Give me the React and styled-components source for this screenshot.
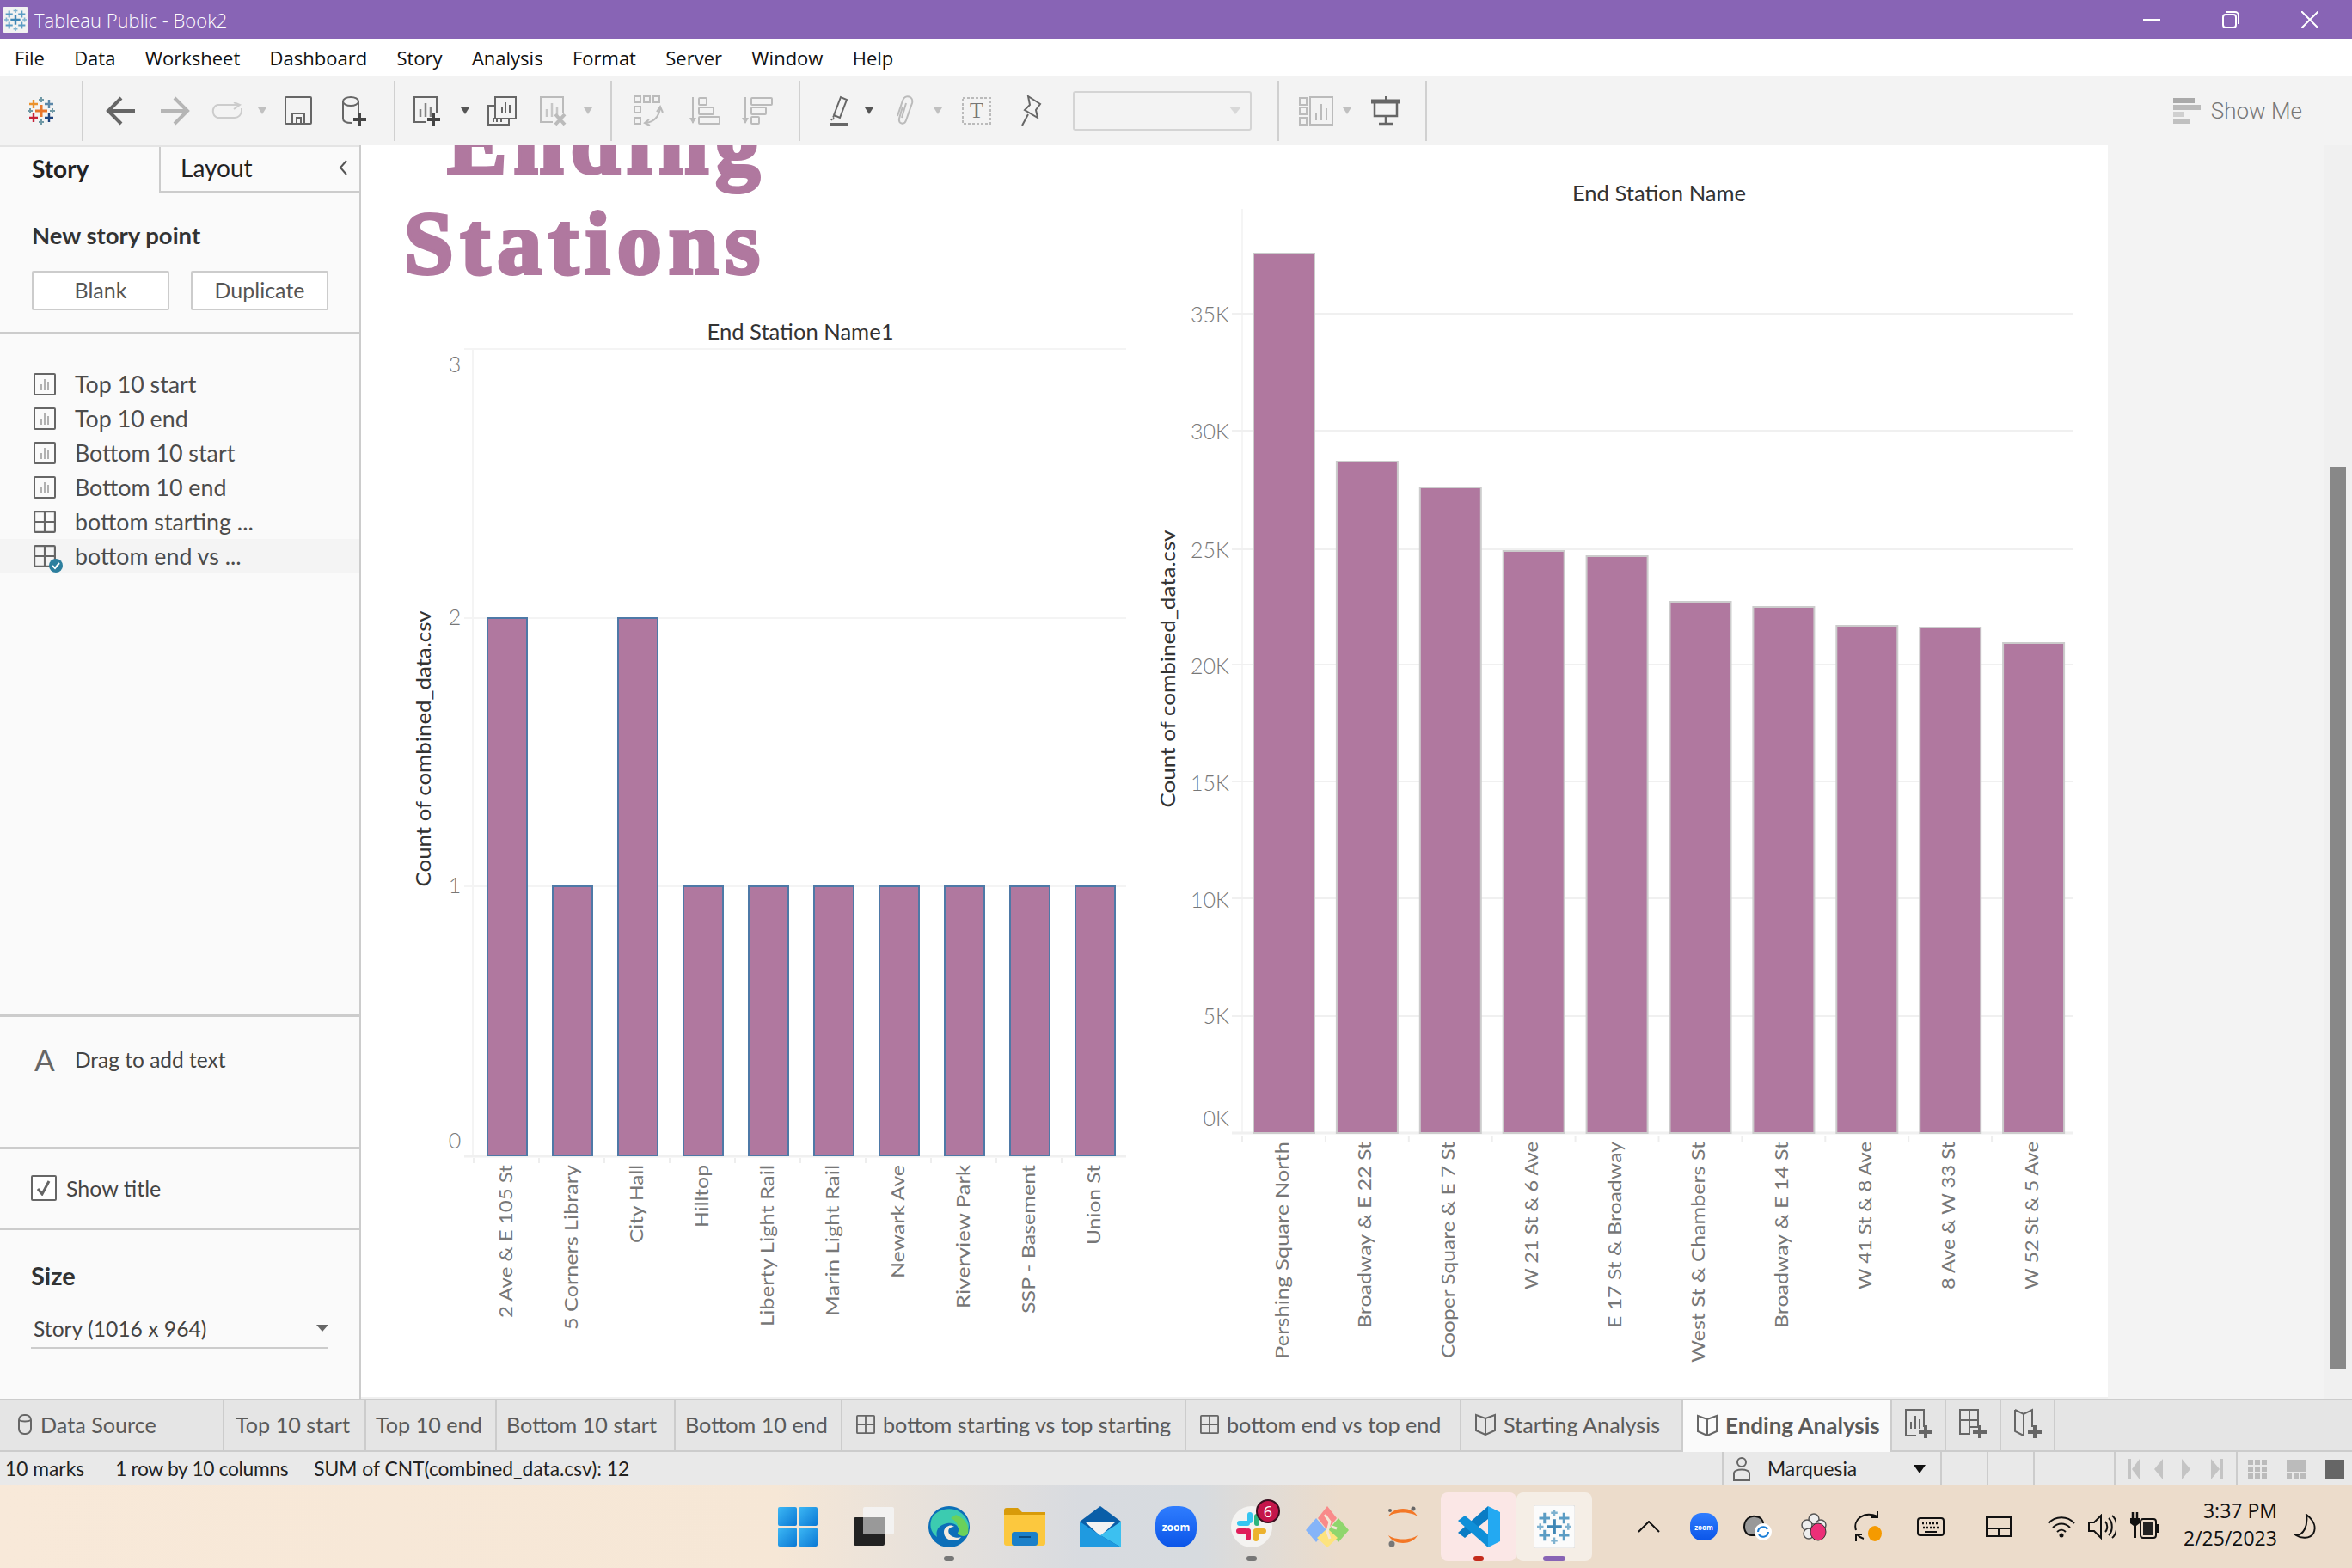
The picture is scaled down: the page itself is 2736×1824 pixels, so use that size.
import React from 'react'
import styled, { createGlobalStyle } from 'styled-components'

const DARK = '#666'
const LIGHT = '#bbb'
const MAUVE = '#b0789f'

const Global = createGlobalStyle`
	html, body {
		margin: 0;
		padding: 0;
		width: 2736px;
		height: 1824px;
		overflow: hidden;
		background: #fff;
		font-family: Lato, "Open Sans", sans-serif;
	}
	* {
		box-sizing: border-box;
	}
`

const Page = styled.div`
	width: 2736px;
	height: 1824px;
	display: flex;
	flex-direction: column;
`

const TitleBar = styled.div`
	height: 45px;
	flex: none;
	background: #8864b5;
	color: #fff;
	display: flex;
	align-items: center;
	padding-left: 3px;
	font-family: "Open Sans", sans-serif;
	font-size: 22px;
	font-weight: 300;
`

const AppTile = styled.div`
	width: 30px;
	height: 30px;
	background: #f2f2f2;
	border-radius: 2px;
	display: flex;
	align-items: center;
	justify-content: center;
	margin-right: 7px;
`

const WindowControls = styled.div`
	margin-left: auto;
	display: flex;
	align-items: center;
	padding-right: 39px;
	gap: 72px;
`

const MenuBar = styled.div`
	height: 43px;
	flex: none;
	background: #fff;
	display: flex;
	align-items: center;
	gap: 34.3px;
	padding-left: 17px;
	font-family: "Open Sans", sans-serif;
	font-size: 22px;
	color: #111;
`

const Toolbar = styled.div`
	height: 81px;
	flex: none;
	background: #f3f3f3;
	display: flex;
	align-items: center;
`

const Slot = styled.div`
	flex: none;
	width: ${(p) => p.$w}px;
	margin-left: ${(p) => p.$ml}px;
	display: flex;
	align-items: center;
	justify-content: center;
`

const Separator = styled.div`
	flex: none;
	width: 2px;
	height: 70px;
	margin-left: ${(p) => p.$ml}px;
	background: #d0d0d0;
`

const Drop = styled.div`
	width: 0;
	height: 0;
	border-left: 5px solid transparent;
	border-right: 5px solid transparent;
	border-top: 8px solid ${(p) => p.$color};
`

const SearchBox = styled.div`
	width: 208px;
	height: 46px;
	border: 2px solid #d4d4d4;
	border-radius: 3px;
	display: flex;
	align-items: center;
	justify-content: flex-end;
	padding-right: 10px;
`

const ShowMe = styled.div`
	margin-left: auto;
	padding-right: 58px;
	display: flex;
	align-items: center;
	gap: 12px;
	font-size: 26px;
	font-family: Roboto, sans-serif;
	font-weight: 300;
	color: #777;
`

const Body = styled.div`
	height: 1458px;
	flex: none;
	display: flex;
`

const Sidebar = styled.div`
	width: 420px;
	flex: none;
	background: #fafafa;
	border-right: 2px solid #ccc;
	display: flex;
	flex-direction: column;
	color: #444;
`

const SideTabs = styled.div`
	height: 55px;
	flex: none;
	display: flex;
	border-top: 2px solid #e4e4e4;
	font-size: 28px;
`

const SideTab = styled.div`
	height: 53px;
	display: flex;
	align-items: center;
	color: #222;
	font-weight: ${(p) => (p.$active ? 700 : 400)};
	width: ${(p) => (p.$active ? '185px' : 'auto')};
	flex: ${(p) => (p.$active ? 'none' : '1')};
	padding: 0 14px 3px ${(p) => (p.$active ? '37px' : '23px')};
	border-left: ${(p) => (p.$active ? 'none' : '2px solid #ccc')};
	border-bottom: ${(p) => (p.$active ? 'none' : '2px solid #ccc')};
	justify-content: space-between;
`

const Section = styled.div`
	flex: ${(p) => (p.$grow ? '1' : 'none')};
	height: ${(p) => (p.$h ? `${p.$h}px` : 'auto')};
	padding-top: ${(p) => p.$pt || 0}px;
	padding-left: ${(p) => p.$pl || 0}px;
	border-bottom: ${(p) => (p.$last ? 'none' : '3px solid #ccc')};
`

const SectionHead = styled.div`
	height: 34px;
	line-height: 32px;
	font-size: ${(p) => p.$size}px;
	font-weight: 700;
	color: #333;
`

const ButtonRow = styled.div`
	display: flex;
	gap: 25px;
	margin-top: 23px;
`

const Button = styled.div`
	width: 160px;
	height: 46px;
	background: #fff;
	border: 2px solid #ccc;
	border-radius: 2px;
	display: flex;
	align-items: center;
	justify-content: center;
	padding-bottom: 3px;
	font-size: 25px;
	color: #555;
`

const StoryRow = styled.div`
	height: 40px;
	display: flex;
	align-items: center;
	gap: 22px;
	padding-left: 39px;
	font-size: 26.8px;
	color: #4c4c4c;
	background: ${(p) => (p.$selected ? '#f4f4f4' : 'transparent')};
`

const RowIcon = styled.span`
	position: relative;
	width: 26px;
	height: 26px;
	display: block;
	flex: none;
`

const DoneBadge = styled.svg`
	position: absolute;
	right: -8px;
	bottom: -6px;
`

const DragRow = styled.div`
	display: flex;
	align-items: center;
	height: 34px;
	font-size: 24.5px;
	color: #444;
`

const DragGlyph = styled.span`
	width: 50px;
	font-size: 35px;
	color: #666;
	padding-left: 3px;
`

const CheckRow = styled.div`
	display: flex;
	align-items: center;
	gap: 11px;
	font-size: 25px;
	color: #444;
`

const CheckBox = styled.div`
	width: 30px;
	height: 30px;
	background: #fff;
	border: 2px solid #666;
	border-radius: 2px;
	display: flex;
	align-items: center;
	justify-content: center;
`

const SizeSelect = styled.div`
	width: 346px;
	height: 40px;
	margin-top: 27px;
	padding: 0 0 6px 3px;
	border-bottom: 2px solid #ccc;
	display: flex;
	align-items: center;
	justify-content: space-between;
	font-size: 24.7px;
	color: #444;
`

const Canvas = styled.div`
	width: 2032px;
	flex: none;
	background: #fff;
	display: flex;
	overflow: hidden;
	border-bottom: 2px solid #f0f0f0;
`

const LeftColumn = styled.div`
	width: 900px;
	flex: none;
	display: flex;
	flex-direction: column;
`

const StoryTitle = styled.div`
	height: 191px;
	flex: none;
	overflow: hidden;
	width: 472px;
	text-align: right;
	font-family: "Liberation Serif", serif;
	font-weight: 700;
	font-size: 104px;
	line-height: 117px;
	letter-spacing: 8px;
	color: ${MAUVE};
	-webkit-text-stroke: 4px ${MAUVE};
`

const TitleInner = styled.div`
	margin-top: -62px;
`

const Chart = styled.svg`
	display: block;
	flex: none;
	font-family: Lato, sans-serif;
`

const Gutter = styled.div`
	flex: 1;
	display: flex;
	background: #f3f3f3;
`

const ScrollTrack = styled.div`
	margin-left: auto;
	width: 33px;
	background: #f0f0f0;
	padding: 374px 0 0 7px;
`

const ScrollThumb = styled.div`
	width: 19px;
	height: 1050px;
	background: #888;
`

const TabBar = styled.div`
	height: 62px;
	flex: none;
	background: #e5e5e5;
	border-top: 2px solid #ccc;
	border-bottom: 2px solid #ccc;
	display: flex;
	font-size: 25.2px;
	color: #5a5a5a;
`

const Tab = styled.div`
	flex: none;
	width: ${(p) => p.$w}px;
	height: ${(p) => (p.$active ? 60 : 58)}px;
	padding: 0 0 3px ${(p) => p.$pl}px;
	display: flex;
	align-items: center;
	gap: 9px;
	border-right: 2px solid #ccc;
	background: ${(p) => (p.$active ? '#fafafa' : 'transparent')};
	font-weight: ${(p) => (p.$active ? 700 : 400)};
	font-size: ${(p) => (p.$active ? '26px' : 'inherit')};
`

const StatusBar = styled.div`
	height: 39px;
	flex: none;
	background: #e9e9e9;
	display: flex;
	align-items: center;
	font-size: 22.8px;
	color: #222;
	padding-left: 6px;
`

const StatusText = styled.span`
	margin-right: ${(p) => p.$mr || 0}px;
	letter-spacing: ${(p) => p.$tight || 0}px;
	padding-bottom: 2px;
`

const StatusCells = styled.div`
	margin-left: auto;
	height: 100%;
	display: flex;
`

const StatusCell = styled.div`
	width: ${(p) => p.$w}px;
	flex: none;
	border-left: 2px solid #ccc;
	display: flex;
	align-items: center;
	justify-content: ${(p) => p.$justify || 'flex-start'};
	padding: 0 ${(p) => p.$pr || 0}px 0 ${(p) => p.$pl || 0}px;
	gap: ${(p) => p.$gap || 0}px;
`

const PushRight = styled.span`
	margin-left: auto;
	display: flex;
`

const Taskbar = styled.div`
	height: 96px;
	flex: none;
	display: flex;
	align-items: center;
	padding-left: 884px;
	background: linear-gradient(90deg, #f8e9d9 0, #f6e7d6 33%, #d8dbe0 46%, #d7dbdf 51%, #ecdccb 57%, #ecdccb 100%);
`

const AppSlot = styled.div`
	position: relative;
	flex: none;
	width: 88px;
	height: 80px;
	display: flex;
	align-items: center;
	justify-content: center;
	border-radius: 8px;
	background: ${(p) => p.$bg || 'transparent'};
`

const RunDot = styled.span`
	position: absolute;
	left: 50%;
	bottom: 0;
	transform: translateX(-50%);
	width: ${(p) => p.$w || 12}px;
	height: 6px;
	border-radius: 3px;
	background: ${(p) => p.$color};
`

const Tray = styled.div`
	display: flex;
	align-items: center;
	height: 100%;
`

const Clock = styled.div`
	flex: none;
	text-align: right;
	font-family: "Open Sans", sans-serif;
	font-size: 23px;
	line-height: 32px;
	color: #111;
	padding-bottom: 6px;
	margin-left: ${(p) => p.$ml}px;
`

// lays items out in flow, margin is whatever is left to reach the wanted centre
const place = (items, start = 0) => {
	let end = start
	return items.map((item) => {
		const ml = item.c - item.w / 2 - end
		end = item.c + item.w / 2
		return { ...item, ml }
	})
}

function Cross({ x, y, r, color, w = 2 }) {
	return <path d={`M${x - r} ${y}H${x + r}M${x} ${y - r}V${y + r}`} stroke={color} strokeWidth={w} fill="none" />
}

function TableauLogo({ size = 26, colors }) {
	const c = colors || { a: '#e8762b', b: '#5b87a8', c: '#e8762b', d: '#c72037', e: '#1f447e', f: '#7099a6', g: '#eb912b' }
	return (
		<svg width={size} height={size} viewBox="0 0 32 32">
			<Cross x={16} y={16} r={7} color={c.a} w={3} />
			<Cross x={7} y={8} r={5} color={c.g} w={2.4} />
			<Cross x={25} y={8} r={5} color={c.b} w={2.4} />
			<Cross x={7} y={24} r={5} color={c.d} w={2.4} />
			<Cross x={25} y={24} r={5} color={c.e} w={2.4} />
			<Cross x={16} y={3} r={3} color={c.f} w={2} />
			<Cross x={16} y={29} r={3} color={c.f} w={2} />
			<Cross x={3} y={16} r={3} color={c.f} w={2} />
			<Cross x={29} y={16} r={3} color={c.f} w={2} />
		</svg>
	)
}

const BLUE_LOGO = { a: '#3f86b5', b: '#5b9cc4', c: '#5b9cc4', d: '#5b9cc4', e: '#5b9cc4', f: '#7fb2d0', g: '#5b9cc4' }

function Arrow({ color, flip }) {
	return (
		<svg width="36" height="34" viewBox="0 0 36 34">
			<path
				d={flip ? 'M1 17H32M17 2l15 15-15 15' : 'M35 17H4M19 2 4 17l15 15'}
				stroke={color}
				strokeWidth="4"
				fill="none"
			/>
		</svg>
	)
}

function SheetBadge({ color, badge }) {
	return (
		<svg width="34" height="36" viewBox="0 0 34 36" fill="none">
			<path d="M28 21V2H2v29h14" stroke={color} strokeWidth="2" />
			<path d="M9 25V16M15 25V9M21 25V13" stroke={color} strokeWidth="2.5" opacity=".8" />
			{badge === 'plus' ? (
				<path d="M24 20v15M17 28h15" stroke="#444" strokeWidth="4" />
			) : (
				<path d="M19 22l11 12M30 22 19 34" stroke={color} strokeWidth="4" />
			)}
		</svg>
	)
}

function Sort({ down }) {
	const rows = down
		? [[11, 2, 24, 8], [11, 13, 17, 8], [11, 24, 9, 8]]
		: [[11, 2, 9, 8], [11, 13, 17, 8], [11, 24, 24, 8]]
	return (
		<svg width="36" height="34" viewBox="0 0 36 34" fill="none" stroke={LIGHT} strokeWidth="2">
			<path d="M4 1v30" />
			<path d="M0 25h8l-4 7z" fill={LIGHT} stroke="none" />
			{rows.map((r) => (
				<rect key={r[1]} x={r[0]} y={r[1]} width={r[2]} height={r[3]} rx="1" />
			))}
		</svg>
	)
}

function GridGlyph({ size = 24, color = DARK }) {
	return (
		<svg width={size} height={size} viewBox="0 0 24 24" fill="none" stroke={color} strokeWidth="2">
			<rect x="1" y="1" width="22" height="22" rx="1" />
			<path d="M12 1v22M1 12h22" />
		</svg>
	)
}

function BookGlyph({ color = DARK }) {
	return (
		<svg width="24" height="26" viewBox="0 0 24 26" fill="none" stroke={color} strokeWidth="2">
			<path d="M1 2l11 4 11-4v18l-11 5-11-5zM12 6v19" />
		</svg>
	)
}

function CylinderGlyph() {
	return (
		<svg width="18" height="24" viewBox="0 0 18 24" fill="none" stroke={DARK} strokeWidth="2">
			<rect x="2" y="1" width="14" height="22" rx="6" />
			<path d="M2 7c3 2 11 2 14 0" />
		</svg>
	)
}

function AddGlyph({ kind }) {
	return (
		<svg width="36" height="38" viewBox="0 0 36 38" fill="none" stroke={DARK} strokeWidth="2">
			{kind === 'sheet' && <path d="M23 22V2H2v30h12M8 24v-8M13 24V9M18 24v-11" />}
			{kind === 'grid' && <path d="M2 2h21v20H13v8H2zM13 2v28M2 14h21" />}
			{kind === 'book' && <path d="M2 2l10 5 10-5v20M2 2v25l10 5M12 7v25" />}
			<path d="M25 20v15M17 28h16" strokeWidth="4" />
		</svg>
	)
}

function SheetRowIcon() {
	return (
		<svg width="26" height="26" viewBox="0 0 26 26" fill="none" stroke={DARK}>
			<rect x="1" y="1" width="24" height="24" rx="1" strokeWidth="2" />
			<path d="M9 20v-7M13 20V7M17 20V10" stroke="#999" strokeWidth="1.5" />
		</svg>
	)
}

const TOOLS = [
	{ c: 48, w: 32, node: <TableauLogo size={32} /> },
	{ c: 96, w: 2, sep: true },
	{ c: 140, w: 36, node: <Arrow color="#666" /> },
	{ c: 204, w: 36, node: <Arrow color="#b5b5b5" flip /> },
	{
		c: 264,
		w: 42,
		node: (
			<svg width="42" height="20" viewBox="0 0 42 20" fill="none" stroke="#ccc" strokeWidth="2">
				<path d="M38 7v3a8 8 0 0 1-8 8H10a8 8 0 0 1 0-15h26M29 0l7 3-7 5" />
			</svg>
		),
	},
	{ c: 305, w: 10, node: <Drop $color="#c0c0c0" /> },
	{
		c: 347,
		w: 32,
		node: (
			<svg width="32" height="33" viewBox="0 0 32 33" fill="none" stroke={DARK} strokeWidth="2">
				<rect x="1" y="1" width="30" height="31" rx="1" />
				<path d="M9 32V20h14v12M14 32v-7h5v7" />
			</svg>
		),
	},
	{
		c: 412,
		w: 30,
		node: (
			<svg width="30" height="36" viewBox="0 0 30 36" fill="none" stroke={DARK} strokeWidth="2">
				<ellipse cx="11" cy="7" rx="9" ry="5" />
				<path d="M2 7v20q0 5 10 5M20 7v14" />
				<path d="M21 21v14M14 28h15" stroke="#444" strokeWidth="4" />
			</svg>
		),
	},
	{ c: 459, w: 2, sep: true },
	{ c: 497, w: 34, node: <SheetBadge color={DARK} badge="plus" /> },
	{ c: 541, w: 10, node: <Drop $color="#555" /> },
	{
		c: 584,
		w: 36,
		node: (
			<svg width="36" height="34" viewBox="0 0 36 34" fill="none" stroke={DARK} strokeWidth="2">
				<rect x="10" y="1" width="24" height="25" />
				<path d="M18 20v-7M22 20V7M27 20V10" />
				<path d="M10 11H2v22h24v-7M8 30v-5M12 30v-5M17 30v-5" />
			</svg>
		),
	},
	{ c: 644, w: 34, node: <SheetBadge color={LIGHT} badge="x" /> },
	{ c: 684, w: 10, node: <Drop $color="#c0c0c0" /> },
	{ c: 711, w: 2, sep: true },
	{
		c: 755,
		w: 36,
		node: (
			<svg width="36" height="36" viewBox="0 0 36 36" fill="none" stroke={LIGHT} strokeWidth="2">
				<rect x="1" y="1" width="7" height="7" />
				<rect x="12" y="1" width="7" height="7" />
				<rect x="23" y="1" width="7" height="7" />
				<rect x="1" y="13" width="7" height="7" />
				<rect x="1" y="26" width="7" height="7" />
				<path d="M14 32q14-1 17-17M27 19l4-6 3 7M18 28l-5 4 6 3" />
			</svg>
		),
	},
	{ c: 820, w: 36, node: <Sort /> },
	{ c: 881, w: 36, node: <Sort down /> },
	{ c: 930, w: 2, sep: true },
	{
		c: 976,
		w: 24,
		node: (
			<svg width="24" height="36" viewBox="0 0 24 36" fill="none" stroke={DARK} strokeWidth="2">
				<path d="M6 23l8-21 7 3-8 21z" />
				<path d="M3 29l3-5M5 28l3-4" strokeDasharray="2 2" />
				<path d="M1 34h22" strokeWidth="4" />
			</svg>
		),
	},
	{ c: 1011, w: 10, node: <Drop $color="#555" /> },
	{
		c: 1053,
		w: 24,
		node: (
			<svg width="24" height="36" viewBox="0 0 24 36" fill="none" stroke={LIGHT} strokeWidth="2">
				<path d="M9 13 5 27c-1 6 6 8 8 2l7-20c2-8-8-11-11-3L3 24M13 9 8 26" />
			</svg>
		),
	},
	{ c: 1091, w: 10, node: <Drop $color="#c0c0c0" /> },
	{
		c: 1136,
		w: 34,
		node: (
			<svg width="34" height="32" viewBox="0 0 34 32">
				<rect x="1" y="1" width="32" height="30" fill="none" stroke={LIGHT} strokeWidth="2" strokeDasharray="3 2" />
				<text x="17" y="24" textAnchor="middle" fontFamily="Liberation Serif" fontSize="26" fill="#777">
					T
				</text>
			</svg>
		),
	},
	{
		c: 1200,
		w: 28,
		node: (
			<svg width="28" height="36" viewBox="0 0 28 36" fill="none" stroke={DARK} strokeWidth="2">
				<path d="M10 1l14 9-5 7 2 9-15-9 6-6zM10 22 3 35" />
			</svg>
		),
	},
	{
		c: 1352,
		w: 208,
		node: (
			<SearchBox>
				<svg width="14" height="9" viewBox="0 0 14 9">
					<path d="M0 0h14L7 9z" fill="#d8d8d8" />
				</svg>
			</SearchBox>
		),
	},
	{ c: 1487, w: 2, sep: true },
	{
		c: 1531,
		w: 40,
		node: (
			<svg width="40" height="34" viewBox="0 0 40 34" fill="none" stroke={LIGHT} strokeWidth="2">
				<rect x="1" y="2" width="8" height="8" />
				<rect x="1" y="13" width="8" height="8" />
				<rect x="1" y="25" width="8" height="8" />
				<rect x="13" y="1" width="26" height="32" />
				<path d="M20 28v-8M26 28V9M32 28V14" />
			</svg>
		),
	},
	{ c: 1567, w: 10, node: <Drop $color="#c0c0c0" /> },
	{
		c: 1612,
		w: 36,
		node: (
			<svg width="36" height="34" viewBox="0 0 36 34" fill="none" stroke={DARK}>
				<path d="M18 0v5M1 6h34" strokeWidth="2" />
				<path d="M1 6h34" strokeWidth="5" />
				<path d="M5 8v15h26V8M18 23v9M10 32h16" strokeWidth="2.5" />
			</svg>
		),
	},
	{ c: 1659, w: 2, sep: true },
]

const STORY_POINTS = [
	{ label: 'Top 10 start' },
	{ label: 'Top 10 end' },
	{ label: 'Bottom 10 start' },
	{ label: 'Bottom 10 end' },
	{ label: 'bottom starting ...', grid: true },
	{ label: 'bottom end vs ...', grid: true, selected: true },
]

const LEFT_BARS = [
	{ label: '2 Ave & E 105 St', len: 178, top: 719 },
	{ label: '5 Corners Library', len: 192, top: 1031 },
	{ label: 'City Hall', len: 91, top: 719 },
	{ label: 'Hilltop', len: 73, top: 1031 },
	{ label: 'Liberty Light Rail', len: 188, top: 1031 },
	{ label: 'Marin Light Rail', len: 176, top: 1031 },
	{ label: 'Newark Ave', len: 132, top: 1031 },
	{ label: 'Riverview Park', len: 167, top: 1031 },
	{ label: 'SSP - Basement', len: 173, top: 1031 },
	{ label: 'Union St', len: 93, top: 1031 },
]

const RIGHT_BARS = [
	{ label: 'Pershing Square North', len: 253, top: 295 },
	{ label: 'Broadway & E 22 St', len: 217, top: 537 },
	{ label: 'Cooper Square & E 7 St', len: 252, top: 567 },
	{ label: 'W 21 St & 6 Ave', len: 172, top: 641 },
	{ label: 'E 17 St & Broadway', len: 217, top: 647 },
	{ label: 'West St & Chambers St', len: 257, top: 700 },
	{ label: 'Broadway & E 14 St', len: 217, top: 706 },
	{ label: 'W 41 St & 8 Ave', len: 172, top: 728 },
	{ label: '8 Ave & W 33 St', len: 172, top: 730 },
	{ label: 'W 52 St & 5 Ave', len: 172, top: 748 },
]

const RIGHT_TICKS = [
	{ label: '35K', grid: 365, y: 365 },
	{ label: '30K', grid: 501, y: 501 },
	{ label: '25K', grid: 639, y: 639 },
	{ label: '20K', grid: 773, y: 774 },
	{ label: '15K', grid: 909, y: 910 },
	{ label: '10K', grid: 1045, y: 1046 },
	{ label: '5K', grid: 1182, y: 1181 },
	{ label: '0K', grid: 1318, y: 1300 },
]

function AxisLabel({ x, y, len, children }) {
	return (
		<text
			x={x}
			y={y}
			transform={`rotate(-90 ${x} ${y})`}
			textAnchor="end"
			dominantBaseline="central"
			fontSize="22"
			fill="#777"
			textLength={len}
			lengthAdjust="spacingAndGlyphs"
		>
			{children}
		</text>
	)
}

function AxisTitle({ x, y, len }) {
	return (
		<text
			x={x}
			y={y}
			transform={`rotate(-90 ${x} ${y})`}
			textAnchor="middle"
			dominantBaseline="central"
			fontSize="23"
			fill="#333"
			textLength={len}
			lengthAdjust="spacingAndGlyphs"
		>
			Count of combined_data.csv
		</text>
	)
}

function LeftChart() {
	return (
		<Chart width="900" height="1265" viewBox="420 360 900 1265">
			<text x="931" y="385" textAnchor="middle" dominantBaseline="central" fontSize="25.6" fill="#333">
				End Station Name1
			</text>
			<AxisTitle x={492} y={871} len={321} />
			<path d="M540 406H1310M550 406V1344M540 719H1310M540 1031H1310" stroke="#f4f4f4" strokeWidth="2" fill="none" />
			<path d="M540 1345H1310" stroke="#f0f0f0" strokeWidth="3" />
			{[
				['3', 423],
				['2', 717],
				['1', 1029],
				['0', 1326],
			].map(([label, y]) => (
				<text key={label} x="529" y={y} textAnchor="middle" dominantBaseline="central" fontSize="25" fontWeight="300" fill="#777">
					{label}
				</text>
			))}
			{LEFT_BARS.map((bar, i) => (
				<g key={bar.label}>
					<rect x={567 + 76 * i} y={bar.top} width="46" height={1344 - bar.top} fill={MAUVE} stroke="#4e79a7" strokeWidth="2" />
					<path d={`M${551 + 76 * i} 1347v6`} stroke="#eee" strokeWidth="2" />
					<AxisLabel x={587 + 76 * i} y={1355} len={bar.len}>
						{bar.label}
					</AxisLabel>
				</g>
			))}
		</Chart>
	)
}

function RightChart() {
	return (
		<Chart width="1132" height="1456" viewBox="1320 169 1132 1456">
			<text x="1930" y="224" textAnchor="middle" dominantBaseline="central" fontSize="25.6" fill="#333">
				End Station Name
			</text>
			<AxisTitle x={1358} y={778} len={323} />
			<path d="M1445 243V1318" stroke="#f5f5f5" strokeWidth="2" />
			{RIGHT_TICKS.map((tick) => (
				<g key={tick.label}>
					<path d={`M1433 ${tick.grid}H2412`} stroke="#f0f0f0" strokeWidth={tick.label === '0K' ? 3 : 2} />
					<text x="1430" y={tick.y} textAnchor="end" dominantBaseline="central" fontSize="25" fontWeight="300" fill="#777">
						{tick.label}
					</text>
				</g>
			))}
			{RIGHT_BARS.map((bar, i) => (
				<g key={bar.label}>
					<rect x={1458 + 96.9 * i} y={bar.top} width="71" height={1318 - bar.top} fill={MAUVE} stroke="#ccc" strokeWidth="2" />
					<path d={`M${1445 + 96.9 * i} 1322v6`} stroke="#eee" strokeWidth="2" />
					<AxisLabel x={1490 + 96.9 * i} y={1328} len={bar.len}>
						{bar.label}
					</AxisLabel>
				</g>
			))}
		</Chart>
	)
}

const TABS = [
	{ w: 261, pl: 20, label: 'Data Source', icon: <CylinderGlyph /> },
	{ w: 165, pl: 13, label: 'Top 10 start' },
	{ w: 152, pl: 11, label: 'Top 10 end' },
	{ w: 208, pl: 11, label: 'Bottom 10 start' },
	{ w: 194, pl: 11, label: 'Bottom 10 end' },
	{ w: 400, pl: 16, label: 'bottom starting vs top starting', icon: <GridGlyph size={22} /> },
	{ w: 320, pl: 16, label: 'bottom end vs top end', icon: <GridGlyph size={22} /> },
	{ w: 258, pl: 16, label: 'Starting Analysis', icon: <BookGlyph /> },
	{ w: 243, pl: 16, label: 'Ending Analysis', icon: <BookGlyph />, active: true },
	{ w: 63, pl: 14, add: 'sheet' },
	{ w: 64, pl: 14, add: 'grid' },
	{ w: 63, pl: 14, add: 'book' },
]

function WinLogo() {
	return (
		<svg width="46" height="46" viewBox="0 0 46 46">
			<defs>
				<linearGradient id="win" x1="0" y1="0" x2="1" y2="1">
					<stop offset="0" stopColor="#3db8f5" />
					<stop offset="1" stopColor="#0a78d4" />
				</linearGradient>
			</defs>
			<rect width="22" height="22" rx="2" fill="url(#win)" />
			<rect x="24" width="22" height="22" rx="2" fill="url(#win)" />
			<rect y="24" width="22" height="22" rx="2" fill="url(#win)" />
			<rect x="24" y="24" width="22" height="22" rx="2" fill="url(#win)" />
		</svg>
	)
}

function TaskView() {
	return (
		<svg width="48" height="46" viewBox="0 0 48 46">
			<rect x="1" y="12" width="36" height="33" rx="2" fill="#222" />
			<rect x="12" y="0" width="36" height="32" rx="2" fill="#f4f4f4" opacity=".85" />
			<rect x="12" y="12" width="25" height="20" fill="#999" />
		</svg>
	)
}

function Edge() {
	return (
		<svg width="48" height="48" viewBox="0 0 48 48">
			<circle cx="24" cy="24" r="24" fill="#0c6fb8" />
			<path d="M4 14C10 2 36-4 46 18c4 12-6 18-12 14 4-6-2-14-12-12C12 22 8 28 10 36 2 30 1 22 4 14z" fill="#3ccbb0" />
			<path d="M32 10c10 4 16 12 14 22-2 4-8 4-12 0 3-6 0-14-8-18z" fill="#6bd15a" />
			<path d="M18 30c0-6 8-10 12-6-6 0-8 4-6 8s10 6 14 4c-4 6-20 6-20-6z" fill="#f4ecdf" />
		</svg>
	)
}

function Folder() {
	return (
		<svg width="48" height="44" viewBox="0 0 48 44">
			<path d="M0 3a3 3 0 0 1 3-3h13l5 5h27v8H0z" fill="#d89b0a" />
			<path d="M0 8h48v33a3 3 0 0 1-3 3H3a3 3 0 0 1-3-3z" fill="#fcc83e" />
			<rect x="9" y="28" width="30" height="16" rx="3" fill="#1b80c9" />
			<rect x="17" y="33" width="14" height="2" fill="#0b4c80" />
		</svg>
	)
}

function Mail() {
	return (
		<svg width="48" height="48" viewBox="0 0 48 48">
			<path d="M24 0 48 18v30H0V18z" fill="#0a5ea8" />
			<path d="M6 18h36L24 35z" fill="#f2f2f2" />
			<path d="M48 18v30L24 34z" fill="#3cc0f0" />
			<path d="M0 18v30h48L24 34z" fill="#1f9ae0" />
		</svg>
	)
}

const ZoomMark = styled.div`
	width: ${(p) => p.$size}px;
	height: ${(p) => p.$size}px;
	border-radius: 42%;
	background: linear-gradient(#2f7dff, #0b55e8);
	color: #fff;
	font-family: "Open Sans", sans-serif;
	font-weight: 700;
	font-size: ${(p) => p.$size * 0.25}px;
	display: flex;
	align-items: center;
	justify-content: center;
`

function Slack() {
	return (
		<svg width="48" height="48" viewBox="0 0 48 48">
			<circle cx="24" cy="24" r="24" fill="#f4f3f1" />
			<rect x="7" y="17" width="15" height="6" rx="3" fill="#36c5f0" />
			<rect x="19" y="7" width="6" height="13" rx="3" fill="#36c5f0" />
			<rect x="27" y="9" width="6" height="14" rx="3" fill="#2eb67d" />
			<rect x="26" y="26" width="15" height="6" rx="3" fill="#ecb22e" />
			<rect x="26" y="29" width="6" height="12" rx="3" fill="#ecb22e" />
			<rect x="6" y="26" width="14" height="6" rx="3" fill="#e01e5a" />
			<rect x="17" y="26" width="6" height="14" rx="3" fill="#e01e5a" />
		</svg>
	)
}

const SlackBadge = styled.span`
	position: absolute;
	top: 8px;
	right: 11px;
	width: 28px;
	height: 28px;
	border-radius: 50%;
	background: #c4164b;
	border: 2px solid #3a1020;
	color: #fff;
	font-family: "Open Sans", sans-serif;
	font-size: 18px;
	display: flex;
	align-items: center;
	justify-content: center;
`

function GitKraken() {
	return (
		<svg width="50" height="48" viewBox="0 0 50 48">
			<path d="M25 0l11 14-11 14-11-14z" fill="#f98a8a" />
			<path d="M12 14l12 14-12 14L0 28z" fill="#85b4f8" />
			<path d="M38 14l12 14-12 14-12-14z" fill="#8fd66d" />
			<path d="M25 26l12 11-12 11-12-11z" fill="#fde37e" />
			<path d="M22 10l6 8-3 12 3 8M30 24l6 2" stroke="#f4e6d6" strokeWidth="3" fill="none" />
		</svg>
	)
}

function Jupyter() {
	return (
		<svg width="36" height="48" viewBox="0 0 36 48">
			<path d="M1 12c6-12 28-12 34 0-8-6-26-6-34 0z" fill="#f37726" />
			<path d="M1 34c6 12 28 12 34 0-8 6-26 6-34 0z" fill="#f37726" />
			<circle cx="30" cy="3" r="2.5" fill="#666" />
			<circle cx="3" cy="5" r="2" fill="#666" />
			<circle cx="5" cy="44" r="3.5" fill="#777" />
		</svg>
	)
}

function VSCode() {
	return (
		<svg width="50" height="48" viewBox="0 0 50 48">
			<path d="M36 0 50 7v34l-14 7z" fill="#23a9f2" />
			<path d="M36 0v15L15 32l-6 5-8-6z" fill="#0a7cc4" />
			<path d="M1 17l8-6 27 22v15z" fill="#0f8fd8" />
		</svg>
	)
}

function TableauTile() {
	return (
		<svg width="48" height="50" viewBox="0 0 48 50">
			<rect width="48" height="50" rx="2" fill="#fbfbfb" stroke="#ddd" />
			<g transform="translate(4 5)">
				<TableauLogo size={40} colors={BLUE_LOGO} />
			</g>
		</svg>
	)
}

const TRAY = [
	{
		c: 1918,
		w: 26,
		node: (
			<svg width="26" height="14" viewBox="0 0 26 14" fill="none" stroke="#111" strokeWidth="2">
				<path d="M1 13 13 1l12 12" />
			</svg>
		),
	},
	{ c: 1982, w: 32, node: <ZoomMark $size={32}>zoom</ZoomMark> },
	{
		c: 2044,
		w: 34,
		node: (
			<svg width="34" height="32" viewBox="0 0 34 32">
				<path d="M2 16c0-8 6-13 13-12 6 0 9 5 9 8v14H10C5 26 2 21 2 16z" fill="#999" stroke="#111" strokeWidth="2" />
				<circle cx="24" cy="22" r="10" fill="#fff" />
				<path d="M18 22a6 6 0 0 1 11-3M30 22a6 6 0 0 1-11 3" fill="none" stroke="#1a7dd6" strokeWidth="2" />
			</svg>
		),
	},
	{
		c: 2110,
		w: 32,
		node: (
			<svg width="32" height="34" viewBox="0 0 32 34">
				<g fill="#eee" stroke="#555" strokeWidth="1.5">
					<circle cx="16" cy="8" r="6" />
					<circle cx="8" cy="15" r="6" />
					<circle cx="24" cy="15" r="6" />
					<circle cx="10" cy="25" r="6" />
				</g>
				<ellipse cx="21" cy="23" rx="9" ry="10" fill="#ec2f78" stroke="#333" />
			</svg>
		),
	},
	{
		c: 2173,
		w: 34,
		node: (
			<svg width="34" height="36" viewBox="0 0 34 36" fill="none" stroke="#111" strokeWidth="2">
				<path d="M3 22C-1 10 12-1 28 6M28 0v7h-7" />
				<path d="M12 32c-4-1-6-3-8-5M3 35v-8h7" />
				<ellipse cx="25" cy="26" rx="8" ry="9" fill="#f59a00" stroke="none" />
			</svg>
		),
	},
	{
		c: 2246,
		w: 32,
		node: (
			<svg width="32" height="22" viewBox="0 0 32 22" fill="none" stroke="#111" strokeWidth="2">
				<rect x="1" y="1" width="30" height="20" rx="3" />
				<path d="M6 7h20M7 12h18" strokeWidth="2.5" strokeDasharray="2 2" />
				<path d="M9 17h14" />
			</svg>
		),
	},
	{
		c: 2325,
		w: 30,
		node: (
			<svg width="30" height="24" viewBox="0 0 30 24" fill="none" stroke="#111" strokeWidth="2">
				<rect x="1" y="1" width="28" height="22" />
				<path d="M1 14h28M15 14v9" />
			</svg>
		),
	},
	{
		c: 2398,
		w: 32,
		node: (
			<svg width="32" height="26" viewBox="0 0 32 26" fill="none" stroke="#111" strokeWidth="2">
				<path d="M1 9c8-9 22-9 30 0M6 14c6-6 14-6 20 0M11 19c3-3 7-3 10 0" />
				<circle cx="16" cy="23" r="2.5" fill="#111" stroke="none" />
			</svg>
		),
	},
	{
		c: 2445,
		w: 32,
		node: (
			<svg width="32" height="30" viewBox="0 0 32 30" fill="none" stroke="#111" strokeWidth="2">
				<path d="M1 10h6l8-8v26l-8-8H1zM20 9c3 3 3 9 0 12M24 5c5 5 5 15 0 20M28 2c7 6 7 20 0 26" />
			</svg>
		),
	},
	{
		c: 2495,
		w: 34,
		node: (
			<svg width="34" height="34" viewBox="0 0 34 34">
				<path d="M3 0v7M8 0v7" stroke="#111" strokeWidth="2.5" />
				<path d="M0 7h11v6l-4 3v14H4V16l-4-3z" fill="#111" />
				<rect x="12" y="8" width="18" height="22" rx="3" fill="none" stroke="#111" strokeWidth="2" />
				<rect x="15" y="11" width="12" height="16" fill="#222" />
				<rect x="30" y="14" width="3" height="10" fill="#111" />
			</svg>
		),
	},
]

function App() {
	const tools = place(TOOLS, 0)
	const tray = place(TRAY, 1852)

	return (
		<>
			<Global />
			<Page>
				<TitleBar>
					<AppTile>
						<TableauLogo size={26} colors={BLUE_LOGO} />
					</AppTile>
					Tableau Public - Book2
					<WindowControls>
						<svg width="20" height="20" viewBox="0 0 20 20" stroke="#fff" strokeWidth="2" fill="none">
							<path d="M0 10h20" />
						</svg>
						<svg width="20" height="20" viewBox="0 0 20 20" stroke="#fff" strokeWidth="2" fill="none">
							<rect x="1" y="4" width="15" height="15" rx="3" />
							<path d="M5 1h10a4 4 0 0 1 4 4v10" />
						</svg>
						<svg width="20" height="20" viewBox="0 0 20 20" stroke="#fff" strokeWidth="2" fill="none">
							<path d="M0 0l20 20M20 0 0 20" />
						</svg>
					</WindowControls>
				</TitleBar>

				<MenuBar>
					{['File', 'Data', 'Worksheet', 'Dashboard', 'Story', 'Analysis', 'Format', 'Server', 'Window', 'Help'].map((m) => (
						<span key={m}>{m}</span>
					))}
				</MenuBar>

				<Toolbar>
					{tools.map((t) =>
						t.sep ? (
							<Separator key={t.c} $ml={t.ml} />
						) : (
							<Slot key={t.c} $w={t.w} $ml={t.ml}>
								{t.node}
							</Slot>
						),
					)}
					<ShowMe>
						<svg width="32" height="30" viewBox="0 0 32 30">
							<rect width="25" height="6" fill="#aaa" />
							<rect y="8" width="32" height="6" fill="#bbb" />
							<rect y="16" width="13" height="6" fill="#d0d0d0" />
							<rect y="24" width="19" height="6" fill="#c0c0c0" />
						</svg>
						Show Me
					</ShowMe>
				</Toolbar>

				<Body>
					<Sidebar>
						<SideTabs>
							<SideTab $active>Story</SideTab>
							<SideTab>
								Layout
								<svg width="10" height="18" viewBox="0 0 10 18" fill="none" stroke="#555" strokeWidth="2">
									<path d="M9 1 2 9l7 8" />
								</svg>
							</SideTab>
						</SideTabs>

						<Section $h={165} $pt={34} $pl={37}>
							<SectionHead $size={27.5}>New story point</SectionHead>
							<ButtonRow>
								<Button>Blank</Button>
								<Button>Duplicate</Button>
							</ButtonRow>
						</Section>

						<Section $grow $pt={38}>
							{STORY_POINTS.map((p) => (
								<StoryRow key={p.label} $selected={p.selected}>
									<RowIcon>
										{p.grid ? <GridGlyph size={26} /> : <SheetRowIcon />}
										{p.selected && (
											<DoneBadge width="16" height="16" viewBox="0 0 16 16">
												<circle cx="8" cy="8" r="8" fill="#2d7f9e" />
												<path d="M4 8l3 3 5-6" fill="none" stroke="#fff" strokeWidth="2" />
											</DoneBadge>
										)}
									</RowIcon>
									{p.label}
								</StoryRow>
							))}
						</Section>

						<Section $h={154} $pt={32} $pl={37}>
							<DragRow>
								<DragGlyph>A</DragGlyph>
								Drag to add text
							</DragRow>
						</Section>

						<Section $h={94} $pt={30} $pl={36}>
							<CheckRow>
								<CheckBox>
									<svg width="18" height="18" viewBox="0 0 18 18" fill="none" stroke="#666" strokeWidth="3">
										<path d="M2 10l5 6 8-15" />
									</svg>
								</CheckBox>
								Show title
							</CheckRow>
						</Section>

						<Section $h={196} $pt={37} $pl={36} $last>
							<SectionHead $size={29}>Size</SectionHead>
							<SizeSelect>
								Story (1016 x 964)
								<svg width="14" height="8" viewBox="0 0 14 8">
									<path d="M0 0h14L7 8z" fill="#666" />
								</svg>
							</SizeSelect>
						</Section>
					</Sidebar>

					<Canvas>
						<LeftColumn>
							<StoryTitle>
								<TitleInner>
									Ending
									<br />
									Stations
								</TitleInner>
							</StoryTitle>
							<LeftChart />
						</LeftColumn>
						<RightChart />
					</Canvas>

					<Gutter>
						<ScrollTrack>
							<ScrollThumb />
						</ScrollTrack>
					</Gutter>
				</Body>

				<TabBar>
					{TABS.map((t) => (
						<Tab key={t.label || t.add} $w={t.w} $pl={t.pl} $active={t.active}>
							{t.add ? <AddGlyph kind={t.add} /> : t.icon}
							{t.label}
						</Tab>
					))}
				</TabBar>

				<StatusBar>
					<StatusText $mr={36}>10 marks</StatusText>
					<StatusText $mr={30} $tight={-0.35}>
						1 row by 10 columns
					</StatusText>
					<StatusText>SUM of CNT(combined_data.csv): 12</StatusText>
					<StatusCells>
						<StatusCell $w={254} $pl={10} $pr={17} $gap={19}>
							<svg width="22" height="28" viewBox="0 0 22 28" fill="none" stroke="#666" strokeWidth="2">
								<circle cx="11" cy="6" r="5" />
								<path d="M2 27v-8c0-6 18-6 18 0v8z" />
							</svg>
							<StatusText>Marquesia</StatusText>
							<PushRight>
								<svg width="14" height="10" viewBox="0 0 14 10">
									<path d="M0 0h14L7 10z" fill="#111" />
								</svg>
							</PushRight>
						</StatusCell>
						<StatusCell $w={54} />
						<StatusCell $w={54} />
						<StatusCell $w={94} />
						<StatusCell $w={142} $pl={15} $pr={14} $justify="space-between">
							<svg width="110" height="24" viewBox="0 0 110 24" fill="#c4c4c4">
								<path d="M0 0h3v24H0zM13 0v24L4 12zM40 0v24L30 12zM62 0v24l10-12zM96 0v24l10-12zM107 0h3v24h-3z" />
							</svg>
						</StatusCell>
						<StatusCell $w={135} $pl={12} $pr={9} $justify="space-between">
							<svg width="22" height="22" viewBox="0 0 22 22" fill="#bbb">
								{[0, 8, 16].map((y) =>
									[0, 8, 16].map((x) => <rect key={`${x}${y}`} x={x} y={y} width="6" height="6" />),
								)}
							</svg>
							<svg width="22" height="22" viewBox="0 0 22 22" fill="#bbb">
								<rect width="22" height="14" />
								<rect y="16" width="6" height="6" />
								<rect x="8" y="16" width="6" height="6" />
								<rect x="16" y="16" width="6" height="6" />
							</svg>
							<svg width="22" height="22" viewBox="0 0 22 22">
								<rect width="22" height="22" fill="#666" />
							</svg>
						</StatusCell>
					</StatusCells>
				</StatusBar>

				<Taskbar>
					<AppSlot>
						<WinLogo />
					</AppSlot>
					<AppSlot>
						<TaskView />
					</AppSlot>
					<AppSlot>
						<Edge />
						<RunDot $color="#777" />
					</AppSlot>
					<AppSlot>
						<Folder />
					</AppSlot>
					<AppSlot>
						<Mail />
					</AppSlot>
					<AppSlot>
						<ZoomMark $size={48}>zoom</ZoomMark>
					</AppSlot>
					<AppSlot>
						<Slack />
						<SlackBadge>6</SlackBadge>
						<RunDot $color="#777" />
					</AppSlot>
					<AppSlot>
						<GitKraken />
					</AppSlot>
					<AppSlot>
						<Jupyter />
					</AppSlot>
					<AppSlot $bg="#fbe7e6">
						<VSCode />
						<RunDot $color="#c42b1c" />
					</AppSlot>
					<AppSlot $bg="#f5eee6">
						<TableauTile />
						<RunDot $color="#8864b5" $w={26} />
					</AppSlot>
					<Tray>
						{tray.map((t) => (
							<Slot key={t.c} $w={t.w} $ml={t.ml}>
								{t.node}
							</Slot>
						))}
						<Clock $ml={28}>
							3:37 PM
							<br />
							2/25/2023
						</Clock>
						<Slot $w={26} $ml={20}>
							<svg width="26" height="30" viewBox="0 0 26 30" fill="none" stroke="#111" strokeWidth="2">
								<path d="M14 1c8 6 12 14 8 22-4 6-14 6-20 2 8 0 14-10 12-24z" />
							</svg>
						</Slot>
					</Tray>
				</Taskbar>
			</Page>
		</>
	)
}

export default App
